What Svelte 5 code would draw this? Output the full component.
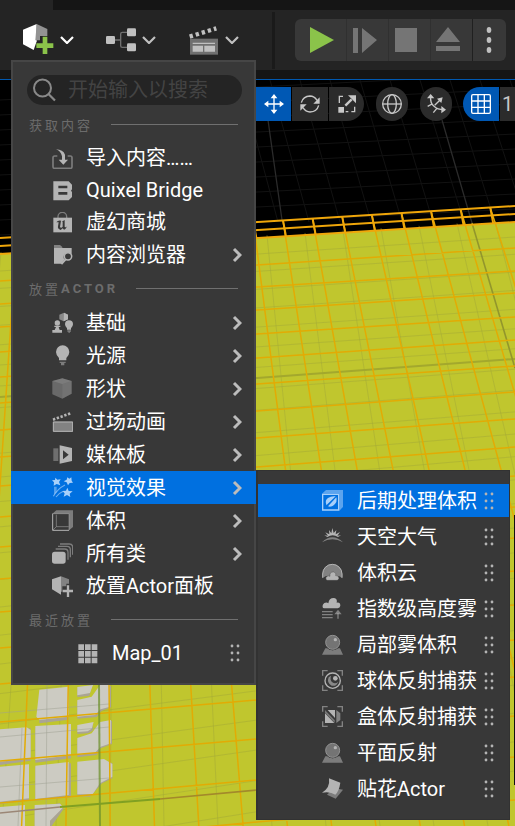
<script>
  const icons = {
    import: `<path d="M16 24H8q-5 0-5 5v27q0 5 5 5h47q5 0 5-5V29q0-5-5-5h-8" fill="none" stroke="currentColor" stroke-width="5" opacity=".55"/><path d="M12 4Q33 5 39 20V35H48L34 50 20 35H30V25Q26 9 12 4Z"/>`,
    bridge: `<path fill-rule="evenodd" d="M4 4H50L60 14V28L57 32 60 36V51L50 61H4ZM19 17V25H46V17ZM19 36V44H46V36Z"/>`,
    store: `<path d="M18 18V14a13 13 0 0 1 26 0v4" fill="none" stroke="currentColor" stroke-width="4" opacity=".55"/><path d="M4 17H60V61H4Z"/><path d="M13 31Q18 24 27 26L24 45Q27 50 32 44V29L29 29 38 24V44Q41 48 46 42Q41 52 36 53L32 49 26 54Q16 51 18 43L20 31Z" fill="#383838"/>`,
    folder: `<path d="M6 3H24L31 9V13H6Z" opacity=".6"/><path d="M6 12H59V30Q48 22 38 30 32 38 37 47L27 59H6Z"/><circle cx="48" cy="37" r="11" fill="#383838" stroke="currentColor" stroke-width="4.5"/><path d="M41 46L28 60" stroke="currentColor" stroke-width="6"/>`,
    basic: `<path d="M22 8L36 2 48 8V22L35 28 22 22Z" opacity=".65"/><path d="M36 2L48 8V22L35 28Z"/><circle cx="16" cy="33" r="8"/><path d="M7 41H25V45H20L23 54H30V62H1V54H8L12 45H7Z"/><path d="M39 37a12 12 0 1 1 24 0q0 6-6 12v4H45v-4q-6-6-6-12Z"/><path d="M46 55H57V59H54V62H49V59H46Z" opacity=".55"/>`,
    bulb: `<path d="M12 21a20 20 0 1 1 40 0q0 9-9 18v7H21v-7Q12 30 12 21Z"/><path d="M23 50H41V54H37V61H27V54H23Z" opacity=".55"/>`,
    cube: `<path d="M1 9L31 1 59 9V47L31 62 1 49Z" opacity=".4"/><path d="M31 18L59 9V47L31 62Z" opacity=".12"/><path d="M1 9L31 1 59 9 31 18Z" opacity=".25"/>`,
    clap: `<path d="M3 26L58 6" stroke="currentColor" stroke-width="8" stroke-dasharray="7 5"/><path d="M3 32H63V62H3Z" opacity=".6"/><path d="M4 33H62V61H4Z" fill="none" stroke="currentColor" stroke-width="3"/>`,
    media: `<path d="M4 13H19V51H4Z" opacity=".45"/><path fill-rule="evenodd" d="M23 4L60 12V51L23 59ZM33 19V46L50 32Z"/>`,
    effects: `<path d="M10 2L16 8 26 7 21 15 25 25 14 21 5 26 6 16 0 10 9 9Z"/><path d="M58 1L59 11 63 17 53 18 48 25 44 16 35 13 44 8 46 1 52 5Z"/><path d="M46 32L50 42 62 43 53 50 55 60 45 54 35 59 38 49 31 42 42 41Z"/><path d="M4 58Q17 35 39 24M12 60Q20 49 34 43" fill="none" stroke="currentColor" stroke-width="3.5" opacity=".65"/><path d="M6 29H14V46L6 53Z" opacity=".5"/>`,
    volume: `<path d="M1 11L13 1H63V51L51 61V11Z" opacity=".55"/><path d="M2 11V61H51" fill="none" stroke="currentColor" stroke-width="3"/><path d="M51 11V61M2 11H51" stroke="currentColor" stroke-width="2" opacity=".7"/><path d="M13 14V50H50M13 50L2 61" fill="none" stroke="currentColor" stroke-width="3" opacity=".5"/>`,
    classes: `<path d="M24 3H52Q62 3 62 13V35M18 10H45Q55 10 55 20V43M11 18H38Q48 18 48 28V50" fill="none" stroke="currentColor" stroke-width="4" opacity=".55"/><rect x="0" y="26" width="41" height="36" rx="8"/>`,
    place: `<path d="M0 10L27 1V56L0 40Z"/><path d="M27 1L51 10V23H43V31H31V47H27Z" opacity=".6"/><path d="M48 28V63M32 45H63" stroke="currentColor" stroke-width="7"/>`,
    grid: `<path d="M4 4h17v17H4zM24 4h17v17H24zM44 4h17v17H44zM4 24h17v17H4zM24 24h17v17H24zM44 24h17v17H44zM4 44h17v17H4zM24 44h17v17H24zM44 44h17v17H44z"/>`,
    post: `<path d="M0 11L12 0H63V51L52 62V11Z" opacity=".55"/><path d="M2 13H50V60H2Z" fill="none" stroke="currentColor" stroke-width="4"/><path d="M13 44Q8 31 18 24T41 19L13 46Z"/><path d="M18 49L43 22Q47 36 36 45 28 52 18 49Z"/>`,
    sky: `<path d="M16 33L7 28 18 29 10 19 22 25 21 12 28 22 31 6 35 21 43 12 41 25 54 18 46 29 57 28 48 33Q32 23 16 33Z"/><path d="M0 49Q31 19 63 49 31 31 0 49Z" opacity=".6"/>`,
    cloud: `<path d="M1 49V36a30 30 0 0 1 60 0V49L51 42H12Z" opacity=".6"/><path d="M2 47V36a29 29 0 0 1 58 0V47" fill="none" stroke="currentColor" stroke-width="3"/><path d="M16 55Q10 54 12 46 18 38 24 43 22 29 35 30 44 32 41 41 50 39 51 49 49 54 46 55Z" stroke="#383838" stroke-width="1"/>`,
    fog: `<path d="M3 30Q-1 21 7 15 14 11 19 16 21 0 35 0 47 1 44 14 55 12 55 23 54 30 47 31H7Z"/><path d="M0 41H32M0 50H32M0 59H32M48 62V45" stroke="currentColor" stroke-width="4" opacity=".6"/><path d="M48 35L59 49H37Z" opacity=".6"/>`,
    sphere: `<path d="M10 43H18Q31 55 46 43H54L63 62H0Z" opacity=".55"/><circle cx="32" cy="25" r="24" fill="#383838"/><circle cx="32" cy="25" r="21" fill="#747474" stroke="#929292" stroke-width="3"/><circle cx="40" cy="17" r="5"/>`,
    capture: `<path d="M2 17V2H17M46 2H61V17M2 46V61H17M46 61H61V46" fill="none" stroke="currentColor" stroke-width="4" opacity=".6"/><circle cx="32" cy="32" r="23" fill="none" stroke="currentColor" stroke-width="4"/><path d="M27 17Q23 31 31 37 40 43 49 35 43 50 29 47 13 39 20 22Z" opacity=".65"/><circle cx="40" cy="25" r="7"/>`,
    box: `<path d="M2 17V2H17M46 2H61V17M2 46V61H17M46 61H61V46" fill="none" stroke="currentColor" stroke-width="4" opacity=".6"/><path d="M9 22L37 51H9ZM17 12H39V36Z"/><path d="M9 12L38 43V50L9 20Z" opacity=".5"/><path d="M43 12L55 22V42L43 51Z" opacity=".6"/>`,
    decal: `<path d="M36 30L63 35 41 62 15 50Z" opacity=".55"/><path d="M21 1L55 14Q51 40 40 50 24 39 0 44 25 30 21 1Z"/>`
  };

  const content = [
    { icon: 'import', label: '导入内容……' },
    { icon: 'bridge', label: 'Quixel Bridge' },
    { icon: 'store', label: '虚幻商城' },
    { icon: 'folder', label: '内容浏览器', more: true }
  ];
  const actors = [
    { icon: 'basic', label: '基础', more: true },
    { icon: 'bulb', label: '光源', more: true },
    { icon: 'cube', label: '形状', more: true },
    { icon: 'clap', label: '过场动画', more: true },
    { icon: 'media', label: '媒体板', more: true },
    { icon: 'effects', label: '视觉效果', more: true },
    { icon: 'volume', label: '体积', more: true },
    { icon: 'classes', label: '所有类', more: true },
    { icon: 'place', label: '放置Actor面板' }
  ];
  const effects = [
    { icon: 'post', label: '后期处理体积' },
    { icon: 'sky', label: '天空大气' },
    { icon: 'cloud', label: '体积云' },
    { icon: 'fog', label: '指数级高度雾' },
    { icon: 'sphere', label: '局部雾体积' },
    { icon: 'capture', label: '球体反射捕获' },
    { icon: 'box', label: '盒体反射捕获' },
    { icon: 'sphere', label: '平面反射' },
    { icon: 'decal', label: '贴花Actor' }
  ];

  let opened = $state('视觉效果');
  let picked = $state('后期处理体积');
  let query = $state('');

  // Perspective grid of the level floor: heights at the left, middle and right
  const rows = [
    [281, 265, 248], [304, 287, 271], [327, 310, 293], [352, 334, 317], [377, 358, 340],
    [403, 384, 366], [430, 411, 392], [457, 438, 419], [486, 467, 447], [517, 496, 476],
    [547, 527, 507], [579, 559, 538], [612, 592, 571], [648, 627, 605], [684, 662, 640],
    [722, 700, 677], [761, 739, 716], [803, 780, 757], [846, 822, 800]
  ];
  const range = (a, b) => Array.from({ length: b - a + 1 }, (_, i) => a + i);
  const floorRows = rows.map(([a, b, c]) => `M0 ${a}L257 ${b} 515 ${c}`).join('');
  const floorCols = range(-9, 7)
    .map((k) => {
      const x = 283 + 29.6 * k;
      return `M${x} ${238 - x / 16}L${376 + 44.3 * k} 826`;
    })
    .join('');
  const thinCols = range(-8, 8).map((k) => `M${267 + 38 * k} ${252 - (267 + 38 * k) / 16}L${326 + 54 * k} 826`).join('');
  const thinRows = range(0, 23).map((k) => `M0 ${271 + 17 * k + k * k * 0.36}L515 ${237 + 17 * k + k * k * 0.27}`).join('');
  const skyLines =
    range(0, 15).map((k) => `M${150 + 30 * k} 80L${185 + 31 * k} 222`).join('') +
    range(0, 9).map((k) => `M0 ${100 + 15 * k}L515 ${74 + 15 * k}`).join('');
</script>

{#snippet glyph(name)}
  <svg class="glyph" viewBox="0 0 63 63" fill="currentColor" aria-hidden="true">{@html icons[name]}</svg>
{/snippet}

{#snippet grip()}
  <svg class="grip" viewBox="0 0 10 18" fill="currentColor" aria-hidden="true">
    {#each [2, 9, 16] as y}
      <circle cx="2" cy={y} r="1.4" /><circle cx="8" cy={y} r="1.4" />
    {/each}
  </svg>
{/snippet}

{#snippet down()}
  <svg class="down" viewBox="0 0 14 8" aria-hidden="true"><path d="M1 1L7 7 13 1" fill="none" stroke="currentColor" stroke-width="2.2" /></svg>
{/snippet}

{#snippet entry(item)}
  <button class="entry" class:more={item.more} class:on={opened === item.label} onclick={() => (opened = item.label)}>
    {@render glyph(item.icon)}
    <span class="name">{item.label}</span>
    {#if item.more}
      <svg class="next" viewBox="0 0 10 16" aria-hidden="true"><path d="M2 2L8 8 2 14" fill="none" stroke="currentColor" stroke-width="3" /></svg>
    {/if}
  </button>
{/snippet}

<div class="editor">
  <svg class="scene" viewBox="0 0 515 826" preserveAspectRatio="xMinYMin slice" aria-hidden="true">
    <rect width="515" height="826" fill="#000" />
    <path d={skyLines} stroke="#121212" />
    <path d="M442 120L472 223M268 120L282 220" stroke="#2b2b2b" stroke-width="1.3" />
    <path d="M0 254L515 222V826H0Z" fill="#c0c62e" />
    <path d={thinCols + thinRows} fill="none" stroke="#a4aa38" stroke-opacity=".5" />
    <path d="M0 397L257 378 515 359" fill="none" stroke="#a3a82d" stroke-width="2" />
    <path d="M472 223L515 368" stroke="#92962c" stroke-width="1.6" />
    <g transform="translate(0 600) scale(.33333)">
      <g fill="#aaa494">
        <path d="M118 275L206 265V359L118 370ZM232 266L275 260 268 288 232 291ZM232 305L280 292 300 258H333V322L304 333 290 351 232 356ZM106 384L213 372V475L106 488ZM0 393L92 385V482L0 495ZM232 380L278 372V392L265 400 232 402ZM232 420L275 405 304 366 336 362V432L302 445 290 465 232 472ZM0 505L87 496V600L0 613ZM106 500L213 490V592L106 602ZM232 490L312 480 337 490V535L306 550 270 590 232 588ZM0 625L75 619V678H0ZM104 620L180 610 190 628 155 678H104Z" />
      </g>
      <g fill="#cccbc2">
        <path d="M118 269L206 260V350L118 360 109 350ZM232 261L279 255 270 279 232 286ZM232 300L275 290 300 255H330V320L302 328 285 345 232 350ZM106 378L213 372V465L106 480ZM0 388L80 382 92 390V475L0 485ZM232 375L281 366 275 386 263 394 232 396ZM232 414L275 400 300 366 333 360V430L302 440 285 458 232 464ZM0 500L87 493V595L0 605ZM106 497L206 486V585L106 597ZM232 485L312 477 337 492V530L300 550 278 583 232 583ZM0 621L75 615V678H0ZM104 615L180 611 190 622 150 662V678H104Z" />
      </g>
    </g>
    <path d="M0 713L109 704M0 737L109 727M0 787L109 778M47 685L46 826M22 728L18 826" stroke="#9fa293" stroke-opacity=".5" />
    <path d={floorRows + floorCols} fill="none" stroke="#e2ab04" stroke-width="1.5" />
    <path d="M99 685L100 826" stroke="#6f922e" stroke-width="2" stroke-opacity=".75" />
    <path d="M0 813L60 807" stroke="#9b8776" stroke-width="1.6" />
    <path d="M60 807L160 799" stroke="#80a022" stroke-width="1.8" />
    <path d="M160 799L257 790" stroke="#a3892b" stroke-width="1.6" />
    <path d="M0 238L515 206M0 246L515 214M0 254L515 222" stroke="#efa60a" stroke-width="2" />
    <path d={range(-9, 7).map((k) => `M${283 + 29.6 * k} ${238 - (283 + 29.6 * k) / 16}l3 16`).join('')} stroke="#efa60a" stroke-width="2" />
    <path d="M514.5 515V785" stroke="#111" />
  </svg>

  <div class="tabs"><div class="tab"></div></div>
  <header class="bar">
    <button class="tool add" aria-label="添加">
      <svg width="31" height="32" viewBox="0 0 93 96" aria-hidden="true">
        <path d="M0 17L41 0V52L32 78 0 61Z" fill="#fff" /><path d="M41 0L73 15V36H51V49H37Z" fill="#929292" />
        <path d="M66 38V90M40 65H91" stroke="#8bc34a" stroke-width="14" />
      </svg>
      {@render down()}
    </button>
    <button class="tool" aria-label="蓝图">
      <svg width="30" height="24" viewBox="0 0 90 72" aria-hidden="true">
        <path d="M25 36H44M63 13H49Q44 13 44 18V53Q44 58 49 58H63" fill="none" stroke="#707070" stroke-width="4" />
        <g fill="#c0c0c0"><rect y="24" width="27" height="24" rx="4" /><rect x="63" y="1" width="27" height="24" rx="4" /><rect x="63" y="46" width="27" height="24" rx="4" /></g>
      </svg>
      {@render down()}
    </button>
    <button class="tool" aria-label="过场动画">
      <svg width="30" height="30" viewBox="0 0 90 90" aria-hidden="true">
        <path d="M2 35L82 10" stroke="#c0c0c0" stroke-width="13" stroke-dasharray="10 9" />
        <path d="M3 41H87V89H3Z" fill="#707070" /><path d="M11 53H78V57H11ZM11 62H42V80H11ZM46 62H78V80H46Z" fill="#c0c0c0" />
      </svg>
      {@render down()}
    </button>
    <i class="divider"></i>
    <div class="play">
      <button aria-label="播放"><svg viewBox="0 0 42 42"><path d="M15 8V34L39 21Z" fill="#8bc34a" /></svg></button>
      <button aria-label="单步"><svg viewBox="0 0 42 42"><path d="M6 9H11V34H6ZM15 9L30 21 15 34Z" /></svg></button>
      <button aria-label="停止"><svg viewBox="0 0 42 42"><path d="M6 9H28V33H6Z" /></svg></button>
      <button aria-label="弹出"><svg viewBox="0 0 42 42"><path d="M17 8L29 23H5ZM5 27H29V32H5Z" /></svg></button>
      <button aria-label="更多"><svg viewBox="0 0 42 42" class="bright"><ellipse cx="16" cy="11" rx="2.3" ry="3" /><ellipse cx="16" cy="21" rx="2.3" ry="3" /><ellipse cx="16" cy="31" rx="2.3" ry="3" /></svg></button>
    </div>
  </header>

  <div class="view">
    <button class="on" aria-label="移动"><svg viewBox="0 0 60 60"><path d="M30 5V55M5 30H55" /><path class="fill" d="M30 0L40 13H20ZM30 60L40 47H20ZM0 30L13 20V40ZM60 30L47 20V40Z" /></svg></button>
    <button aria-label="旋转"><svg viewBox="0 0 60 60"><path d="M4 26Q9 7 30 6 43 6 51 19M56 34Q51 53 30 54 17 54 9 41" /><path class="fill" d="M59 10V29H40ZM1 50V31H20Z" /></svg></button>
    <button class="end" aria-label="缩放"><svg viewBox="0 0 60 60"><path d="M7 27V7H18M53 38V53H43M34 53H26" /><path d="M25 35L44 16" stroke-width="7" /><path class="fill" d="M33 4H57V28ZM4 39H21V56H4Z" /></svg></button>
    <button class="round" aria-label="坐标系"><svg viewBox="0 0 60 60"><circle cx="30" cy="30" r="28" /><ellipse cx="30" cy="30" rx="13" ry="28" /><path d="M2 30H58" /></svg></button>
    <button class="round" aria-label="表面对齐"><svg viewBox="0 0 60 60"><path d="M14 6Q12 28 24 37 36 48 56 47M26 34L43 17M5 37L18 30M22 56L32 44" /><path class="fill" d="M14 0L25 13H3ZM60 47L46 58V36ZM50 10L46 27 33 14Z" /></svg></button>
    <button class="on start" aria-label="网格"><svg viewBox="0 0 60 60"><rect x="2" y="2" width="56" height="56" rx="4" /><path d="M21 2V58M40 2V58M2 21H58M2 40H58" /></svg></button>
    <button class="value">1</button>
  </div>

  <nav class="menu">
    <label class="search">
      <svg width="24" height="24" viewBox="0 0 24 24" aria-hidden="true"><circle cx="10.5" cy="10" r="8.5" fill="none" stroke="#898989" stroke-width="2" /><path d="M16.5 16L23 22.5" stroke="#898989" stroke-width="2.2" /></svg>
      <input type="text" placeholder="开始输入以搜索" aria-label="搜索" bind:value={query} />
    </label>
    <h2>获取内容</h2>
    {#each content as item}{@render entry(item)}{/each}
    <h2>放置<b>ACTOR</b></h2>
    {#each actors as item}{@render entry(item)}{/each}
    <h2>最近放置</h2>
    <button class="entry recent">{@render glyph('grid')}<span class="name">Map_01</span>{@render grip()}</button>
  </nav>

  <nav class="submenu">
    {#each effects as item}
      <button class="entry more" class:on={picked === item.label} onclick={() => (picked = item.label)}>
        {@render glyph(item.icon)}<span class="name">{item.label}</span>{@render grip()}
      </button>
    {/each}
  </nav>
</div>

<style>
  :global(body) { margin: 0; background: #000; }
  .editor {
    position: relative;
    min-height: 100vh;
    overflow: hidden;
    font-family: Roboto, "Noto Sans CJK SC", sans-serif;
    color: #fff;
  }
  button {
    border: 0;
    padding: 0;
    background: none;
    font: inherit;
    color: inherit;
  }
  svg { display: block; flex: none; }
  .scene { position: absolute; inset: 0; width: 100%; height: 100%; }
  .tabs, .bar, .view { position: relative; }
  .tabs { height: 10px; background: #151515; }
  .tab { width: 53px; height: 10px; background: #242424; }
  .bar {
    display: flex;
    align-items: center;
    height: 60px;
    padding-left: 23px;
    background: #242424;
    border-bottom: 9px solid #151515;
    box-shadow: 0 1px #0058b0;
  }
  .tool { display: flex; align-items: center; gap: 6px; width: 83px; color: #c0c0c0; }
  .tool.add { color: #fff; }
  .down { width: 14px; height: 8px; }
  .divider { width: 3px; height: 57px; background: #1a1a1a; }
  .play {
    display: flex;
    flex: none;
    margin-left: 20px;
    border-radius: 6px;
    background: #383838;
    overflow: hidden;
  }
  .play button { width: 42px; height: 42px; border-left: 1px solid #303030; }
  .play button:first-child { width: 51px; border: 0; }
  .play button:last-child { width: 34px; border-color: #202020; }
  .play svg { width: 42px; height: 42px; fill: #757575; }
  .play .bright { fill: #c0c0c0; }

  .view { display: flex; gap: 1px; margin-top: 8px; padding-left: 256px; }
  .view button {
    display: flex;
    flex: none;
    align-items: center;
    justify-content: center;
    width: 36px;
    height: 34px;
    background: #2b2b2b;
    color: #c8c8c8;
  }
  .view svg { width: 20px; height: 20px; fill: none; stroke: currentColor; stroke-width: 4; }
  .view .fill { fill: currentColor; stroke: none; }
  .view .on { background: #0058b4; color: #fff; }
  .view button:first-child { width: 35px; }
  .view .end { width: 35px; border-radius: 0 17px 17px 0; }
  .view .round { width: 32px; margin-left: 11px; border-radius: 17px; }
  .view .start { margin-left: 10px; border-radius: 17px 0 0 17px; }
  .view .value { flex: 1; width: auto; font-size: 20px; }

  .menu, .submenu { position: absolute; box-sizing: border-box; background: #383838; }
  .menu { left: 11px; top: 60px; width: 245px; padding: 13px 0 14px; border: 2px solid #464646; }
  .submenu {
    display: flex;
    flex-direction: column;
    gap: 3px;
    left: 256px;
    top: 470px;
    width: 254px;
    padding: 13px 0 14px;
    border: 1px solid #323232;
    border-left-width: 2px;
  }
  .search {
    display: flex;
    align-items: center;
    gap: 12px;
    height: 30px;
    margin: 0 12px 2px 14px;
    padding-left: 5px;
    border-radius: 15px;
    background: #242424;
  }
  input {
    flex: 1;
    min-width: 0;
    height: 28px;
    padding: 0;
    border: 0;
    outline: 0;
    background: none;
    color: #c0c0c0;
    font: inherit;
    font-size: 20px;
  }
  input::placeholder { color: #434343; opacity: 1; }
  h2 {
    display: flex;
    align-items: center;
    height: 35px;
    margin: 0 16px;
    color: #6c6c6c;
    font-size: 13px;
    font-weight: 400;
    letter-spacing: 3px;
  }
  h2 b { font-weight: 700; }
  h2::after { content: ""; flex: 1; height: 1px; margin-left: 18px; background: #707070; }
  .entry {
    display: flex;
    align-items: center;
    gap: 13px;
    width: 100%;
    height: 32px;
    padding: 0 12px 0 39px;
    font-size: 20px;
    line-height: 32px;
    text-align: left;
    white-space: nowrap;
  }
  .more { height: 33px; }
  .name { flex: 1; }
  .glyph { width: 21px; height: 21px; color: #b4b4b4; }
  .next { width: 10px; height: 16px; color: #bcbcbc; }
  .grip { width: 10px; height: 18px; color: #b4b4b4; }
  .entry.on { background: #0070e0; }
  .menu .entry.on { box-shadow: -2px 0 #0070e0, 2px 0 #0070e0; }
  .on .glyph { color: #a8d0fa; }
  .recent { gap: 14px; padding: 0 14px 0 64px; }
  .submenu .entry { gap: 14px; padding: 0 15px 0 64px; }
  .submenu .name { width: 112px; flex: 1 0 112px; }
  .submenu .grip { margin-left: -8px; }
</style>
